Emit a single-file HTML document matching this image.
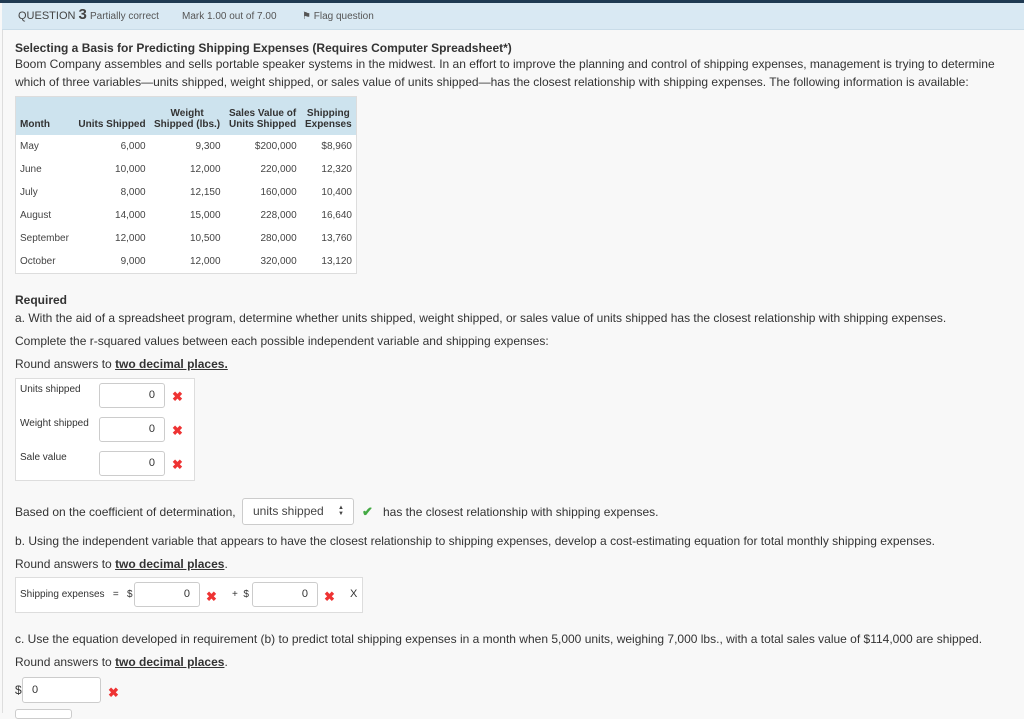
<!DOCTYPE html>
<html><head><meta charset="utf-8"><style>
*{margin:0;padding:0;box-sizing:border-box}
body{width:1024px;height:713px;overflow:hidden;background:#f8f8f8;font-family:"Liberation Sans",sans-serif;color:#333;position:relative}
.a{position:absolute;white-space:nowrap}
.t{font-size:12px}
.s{font-size:10px}
.box{position:absolute;background:#fff;border:1px solid #ddd}
.in{position:absolute;background:#fff;border:1px solid #ccc;border-radius:3px;font-size:11px;text-align:right;padding-right:9px}
.x{position:absolute;color:#e33;font-size:13px;font-weight:bold}
table{border-collapse:collapse;font-size:10px;color:#444}
td,th{padding:0 4px;text-align:right;height:23px}
td:first-child,th:first-child{text-align:left}
u{font-weight:bold}
</style></head><body>
<div class="a" style="left:0;top:0;width:1024px;height:3px;background:#1f3a52"></div>
<div class="a" style="left:2px;top:3px;width:1022px;height:27px;background:#d9e9f3;border-bottom:1px solid #c9dce8"></div>
<div class="a" style="left:2px;top:30px;width:1px;height:683px;background:#ddd"></div>
<div class="a" style="left:18px;top:6px;font-size:11px;color:#444">QUESTION <span style="font-size:15px;font-weight:bold">3</span></div>
<div class="a s" style="left:90px;top:11px;color:#555">Partially correct</div>
<div class="a s" style="left:182px;top:11px;color:#555">Mark 1.00 out of 7.00</div>
<div class="a s" style="left:302px;top:11px;color:#555">&#9873; Flag question</div>
<div class="a t" style="left:15px;top:41px;font-weight:bold">Selecting a Basis for Predicting Shipping Expenses (Requires Computer Spreadsheet*)</div>
<div class="a t" style="left:15px;top:57px">Boom Company assembles and sells portable speaker systems in the midwest. In an effort to improve the planning and control of shipping expenses, management is trying to determine</div>
<div class="a t" style="left:15px;top:75px">which of three variables—units shipped, weight shipped, or sales value of units shipped—has the closest relationship with shipping expenses. The following information is available:</div>
<div class="box" style="left:15px;top:96px;width:342px;height:178px">
<table style="width:340px">
<tr style="background:#cde3ee;font-weight:bold;color:#333"><th style="height:38px;vertical-align:bottom;padding-bottom:5px">Month</th><th style="vertical-align:bottom;padding-bottom:5px">Units Shipped</th><th style="vertical-align:bottom;padding-bottom:5px;text-align:center">Weight<br>Shipped (lbs.)</th><th style="vertical-align:bottom;padding-bottom:5px;text-align:center">Sales Value of<br>Units Shipped</th><th style="vertical-align:bottom;padding-bottom:5px;text-align:center">Shipping<br>Expenses</th></tr>
<tr><td>May</td><td>6,000</td><td>9,300</td><td>$200,000</td><td>$8,960</td></tr>
<tr><td>June</td><td>10,000</td><td>12,000</td><td>220,000</td><td>12,320</td></tr>
<tr><td>July</td><td>8,000</td><td>12,150</td><td>160,000</td><td>10,400</td></tr>
<tr><td>August</td><td>14,000</td><td>15,000</td><td>228,000</td><td>16,640</td></tr>
<tr><td>September</td><td>12,000</td><td>10,500</td><td>280,000</td><td>13,760</td></tr>
<tr><td>October</td><td>9,000</td><td>12,000</td><td>320,000</td><td>13,120</td></tr>
</table></div>
<div class="a t" style="left:15px;top:293px;font-weight:bold">Required</div>
<div class="a t" style="left:15px;top:311px">a. With the aid of a spreadsheet program, determine whether units shipped, weight shipped, or sales value of units shipped has the closest relationship with shipping expenses.</div>
<div class="a t" style="left:15px;top:334px">Complete the r-squared values between each possible independent variable and shipping expenses:</div>
<div class="a t" style="left:15px;top:357px">Round answers to <u>two decimal places.</u></div>
<div class="box" style="left:15px;top:378px;width:180px;height:103px"></div>
<div class="a s" style="left:20px;top:384px">Units shipped</div>
<div class="a s" style="left:20px;top:418px">Weight shipped</div>
<div class="a s" style="left:20px;top:452px">Sale value</div>
<div class="in" style="left:99px;top:383px;width:66px;height:25px;line-height:23px">0</div>
<div class="in" style="left:99px;top:417px;width:66px;height:25px;line-height:23px">0</div>
<div class="in" style="left:99px;top:451px;width:66px;height:25px;line-height:23px">0</div>
<div class="x" style="left:172px;top:389px">✖</div>
<div class="x" style="left:172px;top:423px">✖</div>
<div class="x" style="left:172px;top:457px">✖</div>
<div class="a t" style="left:15px;top:505px">Based on the coefficient of determination,</div>
<div class="in" style="left:242px;top:498px;width:112px;height:27px;line-height:25px;text-align:left;padding-left:10px;font-size:12px;color:#444">units shipped</div>
<div class="a" style="left:338px;top:505px;font-size:6px;line-height:6px;color:#444">▲<br>▼</div>
<div class="a" style="left:362px;top:504px;color:#4a4;font-size:13px;font-weight:bold">✔</div>
<div class="a t" style="left:383px;top:505px">has the closest relationship with shipping expenses.</div>
<div class="a t" style="left:15px;top:534px">b. Using the independent variable that appears to have the closest relationship to shipping expenses, develop a cost-estimating equation for total monthly shipping expenses.</div>
<div class="a t" style="left:15px;top:557px">Round answers to <u>two decimal places</u>.</div>
<div class="box" style="left:15px;top:577px;width:348px;height:36px"></div>
<div class="a s" style="left:20px;top:589px">Shipping expenses &nbsp;&nbsp;= &nbsp;&nbsp;$</div>
<div class="in" style="left:134px;top:582px;width:66px;height:25px;line-height:23px">0</div>
<div class="x" style="left:206px;top:589px">✖</div>
<div class="a s" style="left:232px;top:589px">+ &nbsp;$</div>
<div class="in" style="left:252px;top:582px;width:66px;height:25px;line-height:23px">0</div>
<div class="x" style="left:324px;top:589px">✖</div>
<div class="a" style="left:350px;top:588px;font-size:11px">X</div>
<div class="a t" style="left:15px;top:632px">c. Use the equation developed in requirement (b) to predict total shipping expenses in a month when 5,000 units, weighing 7,000 lbs., with a total sales value of $114,000 are shipped.</div>
<div class="a t" style="left:15px;top:655px">Round answers to <u>two decimal places</u>.</div>
<div class="a t" style="left:15px;top:683px">$</div>
<div class="in" style="left:22px;top:677px;width:79px;height:26px;line-height:24px;text-align:left;padding-left:9px">0</div>
<div class="x" style="left:108px;top:685px">✖</div>
<div class="in" style="left:15px;top:709px;width:57px;height:10px"></div>
</body></html>
